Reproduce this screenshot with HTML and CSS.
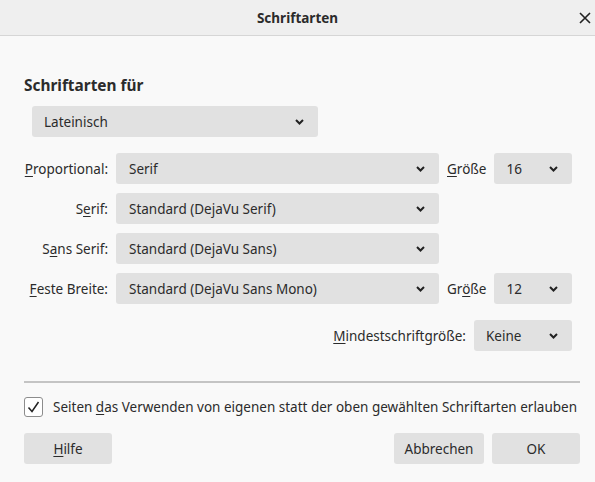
FILE: index.html
```html
<!DOCTYPE html>
<html lang="de">
<head>
<meta charset="utf-8">
<link rel="stylesheet" href="styles.css">
</head>
<body>
<div class="dialog">
  <header class="titlebar">
    <span class="title">Schriftarten</span>
    <span class="close"><svg width="12" height="12" viewBox="0 0 12 12"><path d="M1 1 L11 11 M11 1 L1 11" stroke="#222" stroke-width="1.6" fill="none"/></svg></span>
  </header>
  <main class="content">
    <h2 class="heading">Schriftarten für</h2>
    <div class="select lang">Lateinisch<svg class="chev" width="9" height="6" viewBox="0 0 9 6"><path d="M1 1 L4.5 4.5 L8 1" stroke="#222" stroke-width="2" fill="none"/></svg></div>
    <div class="grid">
      <label class="lbl"><u>P</u>roportional:</label>
      <div class="select">Serif<svg class="chev" width="9" height="6" viewBox="0 0 9 6"><path d="M1 1 L4.5 4.5 L8 1" stroke="#222" stroke-width="2" fill="none"/></svg></div>
      <label class="lbl2"><u>G</u>röße</label>
      <div class="select small">16<svg class="chev" width="9" height="6" viewBox="0 0 9 6"><path d="M1 1 L4.5 4.5 L8 1" stroke="#222" stroke-width="2" fill="none"/></svg></div>

      <label class="lbl">S<u>e</u>rif:</label>
      <div class="select">Standard (DejaVu Serif)<svg class="chev" width="9" height="6" viewBox="0 0 9 6"><path d="M1 1 L4.5 4.5 L8 1" stroke="#222" stroke-width="2" fill="none"/></svg></div>
      <span></span><span></span>

      <label class="lbl">S<u>a</u>ns Serif:</label>
      <div class="select">Standard (DejaVu Sans)<svg class="chev" width="9" height="6" viewBox="0 0 9 6"><path d="M1 1 L4.5 4.5 L8 1" stroke="#222" stroke-width="2" fill="none"/></svg></div>
      <span></span><span></span>

      <label class="lbl"><u>F</u>este Breite:</label>
      <div class="select">Standard (DejaVu Sans Mono)<svg class="chev" width="9" height="6" viewBox="0 0 9 6"><path d="M1 1 L4.5 4.5 L8 1" stroke="#222" stroke-width="2" fill="none"/></svg></div>
      <label class="lbl2">Gr<u>ö</u>ße</label>
      <div class="select small">12<svg class="chev" width="9" height="6" viewBox="0 0 9 6"><path d="M1 1 L4.5 4.5 L8 1" stroke="#222" stroke-width="2" fill="none"/></svg></div>
    </div>
    <div class="minrow">
      <label class="lbl"><u>M</u>indestschriftgröße:</label>
      <div class="select keine">Keine<svg class="chev" width="9" height="6" viewBox="0 0 9 6"><path d="M1 1 L4.5 4.5 L8 1" stroke="#222" stroke-width="2" fill="none"/></svg></div>
    </div>
    <hr class="sep">
    <div class="checkrow">
      <span class="checkbox"><svg width="13" height="12" viewBox="0 0 13 12"><path d="M1.5 6.5 L5 10.5 L11.5 1" stroke="#222" stroke-width="1.5" fill="none"/></svg></span>
      <span>Seiten <u>d</u>as Verwenden von eigenen statt der oben gewählten Schriftarten erlauben</span>
    </div>
    <div class="buttons">
      <button class="btn help"><u>H</u>ilfe</button>
      <span class="spacer"></span>
      <button class="btn cancel">Abbrechen</button>
      <button class="btn ok">OK</button>
    </div>
  </main>
</div>
</body>
</html>
```
FILE: styles.css
```css
* { box-sizing: border-box; }
html, body { margin: 0; padding: 0; }
body {
  width: 595px;
  height: 482px;
  background: #f9f9f9;
  font-family: "Noto Sans", "DejaVu Sans", sans-serif;
  font-size: 13.5px;
  color: #2b2b2b;
  overflow: hidden;
}
.dialog { width: 595px; height: 482px; }
.titlebar {
  height: 36px;
  background: #efefef;
  border-bottom: 1px solid #d6d6d6;
  display: flex;
  align-items: center;
  justify-content: center;
  position: relative;
}
.title { font-weight: bold; font-size: 13.5px; color: #2b2b2b; }
.close { position: absolute; right: 4px; top: 12px; width: 12px; height: 12px; display: flex; }
.content { padding: 0 15px 0 24px; }
.heading {
  margin: 40px 0 0 0;
  font-size: 15.4px;
  font-weight: bold;
  line-height: 20px;
  height: 20px;
}
.select {
  height: 31px;
  background: #e1e1e1;
  border-radius: 3px;
  display: flex;
  align-items: center;
  justify-content: space-between;
  padding: 0 14px 0 13px;
  white-space: nowrap;
}
.chev { flex: none; }
.lang { width: 286px; margin: 10px 0 0 8px; padding-left: 12px; height: 31px; }
.grid {
  margin-top: 16px;
  display: grid;
  grid-template-columns: 84px 323px 1fr 78px;
  column-gap: 8px;
  row-gap: 9px;
  width: 548px;
}
.lbl { text-align: right; align-self: center; white-space: nowrap; }
.lbl2 { align-self: center; white-space: nowrap; }
.small { padding-left: 12px; }
.minrow {
  margin-top: 16px;
  width: 548px;
  display: flex;
  justify-content: flex-end;
  align-items: center;
  gap: 8px;
}
.keine { width: 98px; padding-left: 12px; }
.sep {
  margin: 30px 0 0 0;
  border: 0;
  height: 2px;
  background: #c4c4c4;
  width: 556px;
}
.checkrow {
  margin-top: 14px;
  display: flex;
  align-items: center;
  gap: 10px;
  white-space: nowrap;
  height: 20px;
}
.checkbox {
  width: 19px;
  height: 20px;
  border: 1px solid #8c8c8c;
  border-radius: 3px;
  background: #fff;
  display: flex;
  align-items: center;
  justify-content: center;
  flex: none;
}
.buttons {
  margin-top: 16px;
  display: flex;
  width: 556px;
  gap: 8px;
}
.spacer { flex: 1; }
.btn {
  font: inherit;
  color: inherit;
  height: 31px;
  background: #e1e1e1;
  border: 0;
  border-radius: 3px;
  padding: 0;
}
.help { width: 88px; }
.cancel { width: 90px; }
.ok { width: 88px; }
u { text-decoration-thickness: 1px; text-underline-offset: 2px; }
```
